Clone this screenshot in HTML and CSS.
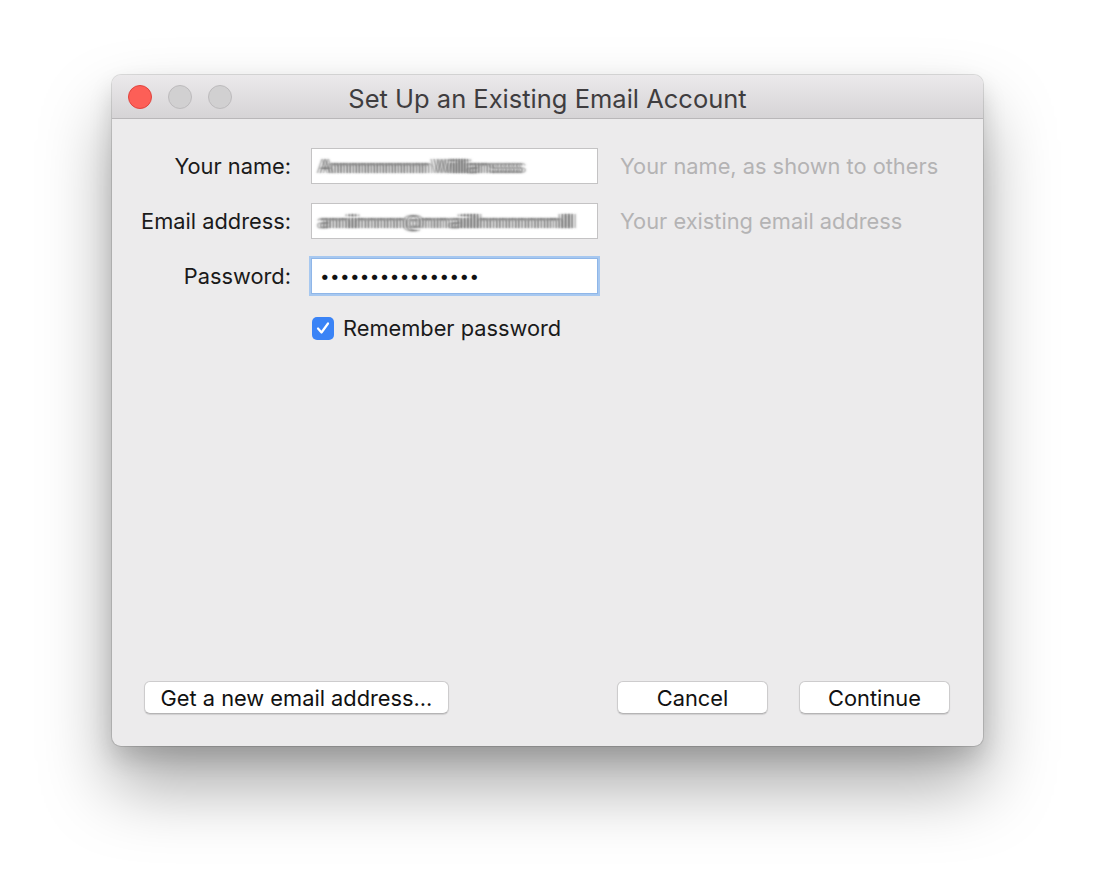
FILE: index.html
```html
<!DOCTYPE html>
<html lang="en">
<head>
<meta charset="utf-8">
<title>Set Up an Existing Email Account</title>
<link rel="stylesheet" href="styles.css">
</head>
<body>
<div class="window">
  <div class="titlebar">
    <div class="lights">
      <span class="light close"></span>
      <span class="light"></span>
      <span class="light"></span>
    </div>
    <div class="title">Set Up an Existing Email Account</div>
  </div>
  <div class="content">
    <div class="form">
      <label class="label">Your name:</label>
      <div class="input"><span class="blurred blur-name">Annnnnnnnnnn Wiilllliamssss</span></div>
      <div class="hint">Your name, as shown to others</div>

      <label class="label">Email address:</label>
      <div class="input"><span class="blurred blur-mail">anniiinnnnn@mmaiiilllnnnnnnnmllll</span></div>
      <div class="hint">Your existing email address</div>

      <label class="label">Password:</label>
      <div class="input focused"><span class="dots">••••••••••••••••</span></div>
      <div class="hint"></div>

      <div class="label"></div>
      <div class="check-row">
        <span class="checkbox">
          <svg viewBox="0 0 22 22" width="22" height="22"><path d="M6 11.5 L9.5 15.5 L16 6.5" fill="none" stroke="#fff" stroke-width="2.2" stroke-linecap="round" stroke-linejoin="round"/></svg>
        </span>
        <span class="check-label">Remember password</span>
      </div>
    </div>
    <div class="buttons">
      <button class="btn btn-wide">Get a new email address...</button>
      <div class="right-buttons">
        <button class="btn">Cancel</button>
        <button class="btn">Continue</button>
      </div>
    </div>
  </div>
</div>
</body>
</html>
```
FILE: styles.css
```css
html, body {
  margin: 0;
  padding: 0;
  background: #ffffff;
}
body {
  font-family: Inter, "Liberation Sans", sans-serif;
  width: 1094px;
  height: 894px;
  overflow: hidden;
  padding-top: 75px;
  padding-left: 112px;
  box-sizing: border-box;
}
.window {
  width: 871px;
  height: 671px;
  background: #ecebec;
  border-radius: 9px;
  box-shadow: 0 0 0 1px rgba(0,0,0,0.12), 0 40px 70px rgba(0,0,0,0.34), 0 12px 24px rgba(0,0,0,0.14);
  display: flex;
  flex-direction: column;
  overflow: hidden;
}
.titlebar {
  height: 43px;
  flex: none;
  background: linear-gradient(#ebe9eb, #d6d4d6);
  border-bottom: 1px solid #b9b7b9;
  display: flex;
  align-items: center;
  position: relative;
}
.lights {
  display: flex;
  gap: 16px;
  padding-left: 16px;
}
.light {
  width: 24px;
  height: 24px;
  border-radius: 50%;
  background: #d1d0d1;
  border: 1px solid #bdbbbd;
  box-sizing: border-box;
}
.light.close {
  background: #fd5f57;
  border-color: #e0443e;
}
.title {
  position: absolute;
  left: 0;
  right: 0;
  top: 0;
  bottom: 0;
  display: flex;
  align-items: center;
  justify-content: center;
  font-size: 25.5px;
  color: #3f3d3f;
  pointer-events: none;
  padding-top: 3px;
}
.content {
  flex: 1;
  display: flex;
  flex-direction: column;
  justify-content: space-between;
  padding: 29px 33px 32px 20px;
}
.form {
  display: grid;
  grid-template-columns: 159px 287px auto;
  column-gap: 20px;
  row-gap: 19px;
  align-items: center;
}
.form .hint {
  margin-left: 2px;
}
.label {
  text-align: right;
  font-size: 21.8px;
  color: #1a1a1a;
}
.input {
  height: 36px;
  box-sizing: border-box;
  background: #fff;
  border: 1px solid #c4c3c4;
  display: flex;
  align-items: center;
  padding-left: 7px;
  overflow: hidden;
}
.input.focused {
  border: 1px solid #8fb6e8;
  box-shadow: 0 0 0 2px #a7c8f0;
}
.hint {
  font-size: 21.8px;
  color: #b4b3b4;
}
.blurred {
  color: transparent;
  font-size: 18px;
  white-space: nowrap;
  text-shadow: -3px 0 2px rgba(110,110,110,0.55), 0 0 2px rgba(100,100,100,0.7), 3px 0 2px rgba(110,110,110,0.55);
  filter: blur(0.5px);
}
.blur-name {
  letter-spacing: -1.6px;
}
.blur-mail {
  letter-spacing: -1.1px;
}
.dots {
  font-size: 17px;
  letter-spacing: 0.4px;
  color: #111;
  padding-left: 1px;
}
.check-row {
  display: flex;
  align-items: center;
  gap: 9px;
  grid-column: 2 / 4;
  margin-left: 1px;
  margin-top: 2px;
}
.checkbox {
  width: 22px;
  height: 23px;
  border-radius: 5px;
  background: #3a83f6;
  display: flex;
  align-items: center;
  justify-content: center;
}
.checkbox svg {
  display: block;
}
.check-label {
  font-size: 21.8px;
  color: #1a1a1a;
}
.buttons {
  display: flex;
  justify-content: space-between;
  align-items: center;
  padding-left: 12px;
}
.right-buttons {
  display: flex;
  gap: 31px;
}
.btn {
  font-family: Inter, "Liberation Sans", sans-serif;
  font-size: 21.8px;
  color: #111;
  background: #fff;
  border: 1px solid #cdcccd;
  border-bottom-color: #b5b4b5;
  border-radius: 6px;
  height: 33px;
  width: 151px;
  padding: 0;
  box-shadow: 0 1px 1px rgba(0,0,0,0.12);
}
.btn-wide {
  width: 305px;
}
```
